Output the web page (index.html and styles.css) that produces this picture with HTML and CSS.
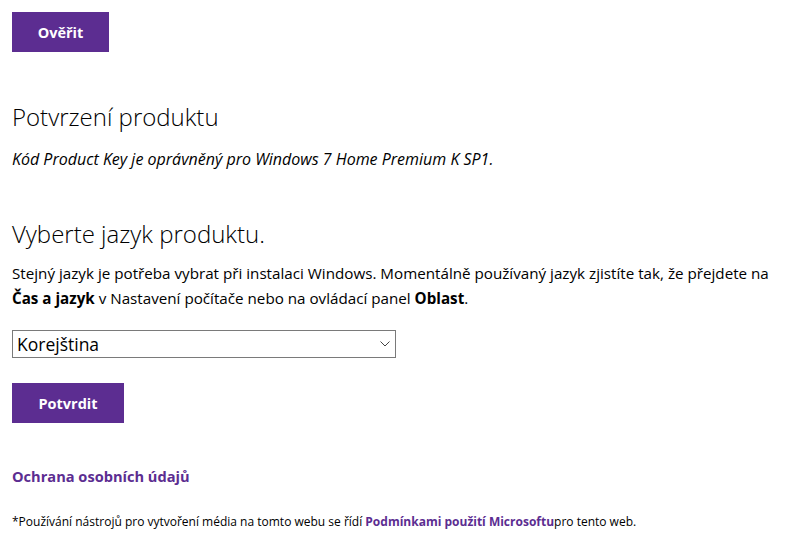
FILE: index.html
```html
<!DOCTYPE html>
<html lang="cs">
<head>
<meta charset="utf-8">
<title>Potvrzení produktu</title>
<link rel="stylesheet" href="styles.css">
</head>
<body>
<main class="page">
  <button class="btn btn-verify" type="button">Ověřit</button>

  <section class="block confirm">
    <h2 class="heading">Potvrzení produktu</h2>
    <p class="note">Kód Product Key je oprávněný pro Windows 7 Home Premium K SP1.</p>
  </section>

  <section class="block language">
    <h2 class="heading">Vyberte jazyk produktu.</h2>
    <p class="text">Stejný jazyk je potřeba vybrat při instalaci Windows. Momentálně používaný jazyk zjistíte tak, že přejdete na <b>Čas a jazyk</b> v Nastavení počítače nebo na ovládací panel <b>Oblast</b>.</p>
    <div class="select-wrap">
      <select class="select">
        <option>Korejština</option>
      </select>
      <svg class="chev" width="10" height="6" viewBox="0 0 10 6"><path d="M0.5 0.5 L5 5 L9.5 0.5" fill="none" stroke="#444" stroke-width="1"/></svg>
    </div>
    <button class="btn btn-confirm" type="button">Potvrdit</button>
  </section>

  <a class="privacy" href="#">Ochrana osobních údajů</a>

  <p class="footer">*Používání nástrojů pro vytvoření média na tomto webu se řídí <a href="#">Podmínkami použití Microsoftu</a>pro tento web.</p>
</main>
</body>
</html>
```

FILE: styles.css
```css
* { box-sizing: border-box; }
html, body { margin: 0; padding: 0; background: #fff; }
body {
  font-family: "Open Sans", "Noto Sans", sans-serif;
  color: #000;
  font-size: 15px;
}
.page {
  display: flex;
  flex-direction: column;
  align-items: flex-start;
  padding: 12px 12px 0 12px;
}
.btn {
  background: #5c2d91;
  color: #fff;
  border: 0;
  font-family: "Open Sans", sans-serif;
  font-weight: 700;
  font-size: 14.5px;
  height: 40px;
  padding: 0;
  cursor: pointer;
}
.btn-verify { width: 97px; }
.btn-confirm { width: 112px; margin-top: 25px; }
.block { display: flex; flex-direction: column; align-items: flex-start; }
.heading {
  margin: 0;
  font-weight: 300;
  font-size: 24px;
  line-height: 32px;
  color: #000;
}
.confirm { margin-top: 49px; }
.note {
  margin: 15px 0 0 0;
  font-style: italic;
  font-size: 16px;
  line-height: 22px;
}
.language { margin-top: 48px; }
.text {
  margin: 11px 0 0 0;
  font-size: 15.2px;
  line-height: 25px;
}
.text b { font-weight: 700; }
.select-wrap {
  position: relative;
  margin-top: 19px;
  width: 384px;
  height: 28px;
}
.select {
  appearance: none;
  -webkit-appearance: none;
  width: 100%;
  height: 100%;
  border: 1px solid #7a7a7a;
  border-radius: 0;
  background: #fff;
  font-family: "Open Sans", sans-serif;
  font-size: 17.5px;
  padding: 0 0 0 4px;
  color: #000;
}
.chev { position: absolute; right: 6px; top: 11px; pointer-events: none; }
.privacy {
  margin-top: 43px;
  color: #5c2d91;
  font-weight: 700;
  font-size: 14.6px;
  text-decoration: none;
}
.footer {
  margin: 27px 0 0 0;
  font-size: 12px;
  color: #000;
}
.footer a { color: #5c2d91; font-weight: 700; text-decoration: none; }
```
